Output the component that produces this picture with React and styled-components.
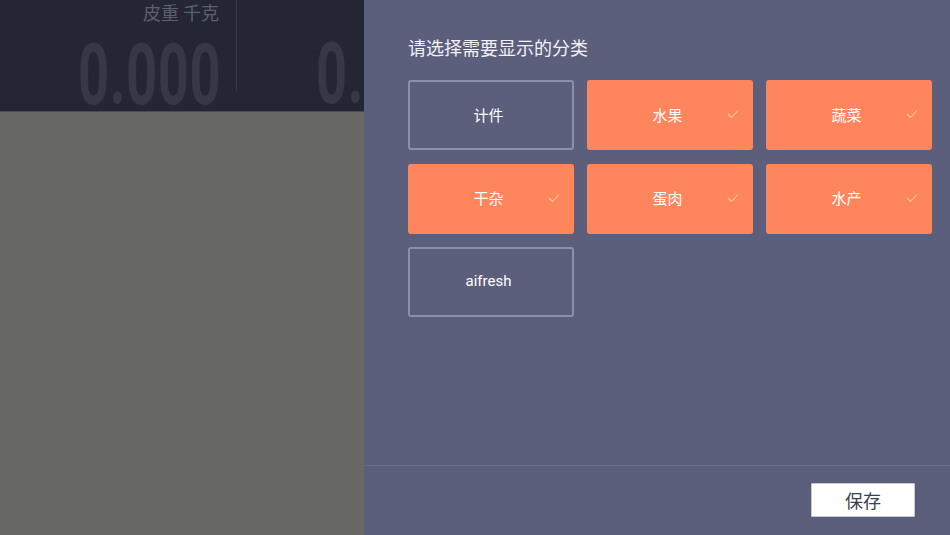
import React from "react";
import styled, { createGlobalStyle } from "styled-components";

const Global = createGlobalStyle`
  html, body { margin: 0; padding: 0; }
  body { font-family: Roboto, "Noto Sans CJK SC", sans-serif; overflow: hidden; }
  * { box-sizing: border-box; }
`;

const Screen = styled.div`
  display: flex;
  width: 950px;
  height: 535px;
  overflow: hidden;
`;

const LeftSide = styled.div`
  width: 364px;
  flex: none;
  display: flex;
  flex-direction: column;
  background: #676765;
  overflow: hidden;
`;

const ScaleBar = styled.div`
  height: 112px;
  background: #242733;
  display: flex;
  border-bottom: 1px solid #4a4c55;
`;

const Readout = styled.div`
  width: 237px;
  flex: none;
  display: flex;
  flex-direction: column;
  align-items: flex-start;
  border-right: 1px solid #353846;
  margin: 0 0 20px;
`;

const ReadLabel = styled.div`
  font-family: "Noto Sans CJK SC", sans-serif;
  font-size: 18px;
  color: #5c5f6c;
  line-height: 22px;
  padding-left: 143px;
  margin-top: 1px;
  white-space: nowrap;
`;

const Digits = styled.div`
  font-family: Roboto, sans-serif;
  font-weight: 700;
  font-size: 86px;
  line-height: 1;
  color: #363945;
  white-space: nowrap;
  transform: scaleX(0.63);
  transform-origin: left top;
  margin-left: ${(p) => p.$left}px;
  margin-top: ${(p) => p.$top}px;
  letter-spacing: 1px;
`;

const SecondReadout = styled.div`
  flex: 1;
  display: flex;
  flex-direction: column;
  padding-top: 23px;
`;

const Panel = styled.div`
  flex: 1;
  background: #5c5f7b;
  display: flex;
  flex-direction: column;
`;

const Content = styled.div`
  flex: 1;
  padding: 37px 0 0 44px;
`;

const Title = styled.h2`
  margin: 0 0 22px;
  font-family: "Noto Sans CJK SC", sans-serif;
  font-weight: 400;
  font-size: 18px;
  line-height: 21px;
  color: #f2f2f6;
`;

const Grid = styled.div`
  display: grid;
  grid-template-columns: repeat(3, 166px);
  grid-auto-rows: 70px;
  column-gap: 13px;
  row-gap: 13.5px;
`;

const Card = styled.div`
  position: relative;
  border-radius: 3px;
  display: flex;
  align-items: center;
  justify-content: center;
  padding: 0 5px 2px 0;
  font-family: Roboto, "Noto Sans CJK SC", sans-serif;
  font-size: 15px;
  color: #ffffff;
  background: ${(p) => (p.$on ? "#ff865c" : "transparent")};
  border: 2px solid ${(p) => (p.$on ? "#ff865c" : "#8c8fac")};
`;

const Check = styled.svg`
  position: absolute;
  right: 12px;
  top: 50%;
  margin-top: -6px;
`;

const Footer = styled.div`
  height: 70px;
  border-top: 1px solid #686c88;
  display: flex;
  align-items: flex-start;
  justify-content: flex-end;
  padding: 17px 35px 0 0;
`;

const SaveButton = styled.button`
  width: 104px;
  height: 34px;
  border: 1px solid #c8c9d4;
  background: #ffffff;
  border-radius: 1px;
  font-family: "Noto Sans CJK SC", sans-serif;
  font-size: 18px;
  color: #3c3e55;
  padding: 0;
`;

const categories = [
  { name: "计件", on: false },
  { name: "水果", on: true },
  { name: "蔬菜", on: true },
  { name: "干杂", on: true },
  { name: "蛋肉", on: true },
  { name: "水产", on: true },
  { name: "aifresh", on: false },
];

const CheckMark = () => (
  <Check width="12" height="10" viewBox="0 0 12 10">
    <path d="M1 5 L4.5 8.5 L11 1.5" fill="none" stroke="#f9cc9c" strokeWidth="1.1" />
  </Check>
);

export default function App() {
  return (
    <Screen>
      <Global />
      <LeftSide>
        <ScaleBar>
          <Readout>
            <ReadLabel>皮重 千克</ReadLabel>
            <Digits $left={78} $top={9}>0.000</Digits>
          </Readout>
          <SecondReadout>
            <Digits $left={79} $top={8}>0.</Digits>
          </SecondReadout>
        </ScaleBar>
      </LeftSide>
      <Panel>
        <Content>
          <Title>请选择需要显示的分类</Title>
          <Grid>
            {categories.map((c) => (
              <Card key={c.name} $on={c.on}>
                {c.name}
                {c.on && <CheckMark />}
              </Card>
            ))}
          </Grid>
        </Content>
        <Footer>
          <SaveButton>保存</SaveButton>
        </Footer>
      </Panel>
    </Screen>
  );
}
